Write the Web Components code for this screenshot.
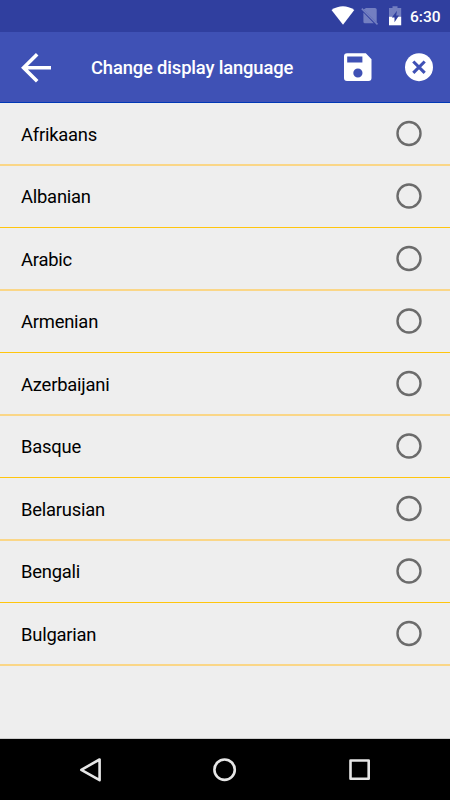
<!DOCTYPE html>
<html lang="en">
<head>
<meta charset="utf-8">
<title>Change display language</title>
<style>
body { margin: 0; background: #eee; font-family: Roboto, "Liberation Sans", sans-serif; }
</style>
</head>
<body>
<language-screen></language-screen>
<script>
function define(name, html) {
  const template = document.createElement('template');
  template.innerHTML = html;
  customElements.define(name, class extends HTMLElement {
    constructor() {
      super();
      this.attachShadow({ mode: 'open' }).append(template.content.cloneNode(true));
    }
  });
}

define('status-bar', `
<style>
:host { display: block; height: 32px; background: #303f9f; color: #fff; }
.bar { display: flex; height: 32px; align-items: center; justify-content: flex-end; padding-right: 9px; box-sizing: border-box; }
svg { display: block; margin-right: 8px; }
span { font-size: 15.500px; font-weight: 500; line-height: 32px; width: 31px; white-space: nowrap; padding-top: 1px; }
</style>
<div class="bar">
<svg width="72" height="32" viewBox="330 0 72 32">
<path d="M331.500 10Q343 2.500 354.300 10L343 24.800Z" fill="#fff"/>
<path d="M366 8h9q1.700 0 1.700 1.500v13L363.600 9.400zM363.400 12.500L373.800 23.200H365q-1.600 0-1.600-1.500z" fill="#737fc1"/>
<path d="M361.800 8.600L377.500 24.400" stroke="#737fc1" stroke-width="1.500"/>
<path d="M389 8h3.500V6.300h5V8h3.700v8.700H389z" fill="#737fc1"/>
<path d="M389 16.700h12.200V25.300H389z" fill="#fff"/>
<path d="M397 10.800L391.800 17.500H394.500V22.300L399 15.500H396.200z" fill="#303f9f"/>
</svg><span>6:30</span>
</div>`);

define('app-bar', `
<style>
:host { display: block; height: 71px; box-sizing: border-box; background: #3f51b5; border-bottom: 1px solid #0037b5; color: #fff; }
header { height: 70px; display: flex; align-items: center; padding: 0 15px 0 20px; }
h1 { margin: 0 0 0 39px; font-size: 18.400px; letter-spacing: -0.160px; font-weight: 500; line-height: 24px; flex: 1; white-space: nowrap; padding-top: 2px; }
svg { display: block; flex: none; }
</style>
<header>
<svg width="32" height="70" viewBox="20 32 32 70"><path d="M51 67.700H24M37.200 54.300L23.600 67.700L37.200 81.300" fill="none" stroke="#fff" stroke-width="3.600"/></svg>
<h1><slot></slot></h1>
<svg width="95" height="70" viewBox="340 32 95 70">
<path fill="#fff" fill-rule="evenodd" d="M347 53.300H365.800L371.500 59.200V78Q371.500 81 368.500 81H347Q344 81 344 78V56.300Q344 53.300 347 53.300ZM347.200 56.400V62.500H362.400V56.400ZM353.300 73a4.600 4.600 0 1 0 9.200 0a4.600 4.600 0 1 0-9.200 0Z"/>
<circle cx="419" cy="67.200" r="14" fill="#fff"/>
<path d="M413.300 61.500L424.700 72.900M424.700 61.500L413.300 72.900" stroke="#3f51b5" stroke-width="3.100"/>
</svg>
</header>`);

define('language-row', `
<style>
:host { display: block; box-sizing: border-box; height: 63px; border-bottom: 2px solid #fad687; color: #000; }
label { display: flex; height: 61px; align-items: center; justify-content: space-between; padding: 0 28px 0 21px; }
span { font-size: 18.400px; letter-spacing: -0.230px; line-height: 24px; padding-top: 2px; }
svg { display: block; width: 26px; height: 27px; }
:host(:nth-of-type(even)) { height: 62px; border-bottom: 1px solid #ffc50d; }
:host(:nth-of-type(even)) label { height: 60px; }
:host(:nth-of-type(even)) svg { height: 26px; }
</style>
<label><span><slot></slot></span><svg><circle cx="50%" cy="50%" r="11.500" fill="none" stroke="#6b6b6b" stroke-width="2.400"/></svg></label>`);

define('navigation-bar', `
<style>
:host { display: block; height: 62px; box-sizing: border-box; background: #000; border-top: 1px solid #ccc; }
svg { display: block; }
</style>
<svg width="450" height="61" viewBox="0 739 450 61" fill="none" stroke="#e6e6e6" stroke-width="2.600" stroke-linejoin="round">
<path d="M81.300 769.800L99.600 759.500V780.200Z"/>
<circle cx="224.600" cy="769.700" r="10.200"/>
<rect x="350.500" y="760.500" width="18.200" height="18.200"/>
</svg>`);

define('language-screen', `
<style>
:host { display: flex; flex-direction: column; height: 800px; background: #eee; }
main { flex: 1; }
</style>
<status-bar></status-bar>
<app-bar>Change display language</app-bar>
<main>
<language-row>Afrikaans</language-row>
<language-row>Albanian</language-row>
<language-row>Arabic</language-row>
<language-row>Armenian</language-row>
<language-row>Azerbaijani</language-row>
<language-row>Basque</language-row>
<language-row>Belarusian</language-row>
<language-row>Bengali</language-row>
<language-row>Bulgarian</language-row>
</main>
<navigation-bar></navigation-bar>`);
</script>
</body>
</html>
